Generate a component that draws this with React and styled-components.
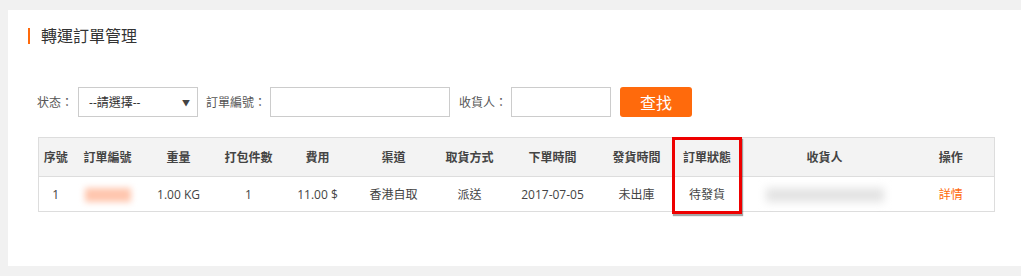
import React from "react";
import styled, { createGlobalStyle } from "styled-components";

const GlobalStyle = createGlobalStyle`
  body {
    margin: 0;
    background: #f1f1f1;
    font-family: "Open Sans", "Noto Sans CJK TC", sans-serif;
  }
`;

const Page = styled.div`
  padding: 10px 0 10px 8px;
`;

const Panel = styled.div`
  background: #fff;
  height: 256px;
  display: flex;
  flex-direction: column;
`;

const Title = styled.div`
  margin: 18px 0 0 20px;
  padding-left: 11px;
  border-left: 2px solid #ff6a0c;
  height: 16px;
  line-height: 16px;
  font-size: 16px;
  color: #333;
`;

const FilterRow = styled.div`
  display: flex;
  align-items: center;
  margin: 43px 0 0 29px;
  height: 30px;
`;

const Label = styled.span`
  font-size: 12px;
  color: #555;
  margin-right: ${(p) => p.gap || "4px"};
`;

const SelectBox = styled.div`
  box-sizing: border-box;
  width: 120px;
  height: 30px;
  border: 1px solid #ccc;
  display: flex;
  align-items: center;
  justify-content: space-between;
  padding: 0 7px 0 10px;
  font-size: 12px;
  color: #333;
  margin-right: 8px;
`;

const Arrow = styled.span`
  font-size: 8px;
  color: #444;
`;

const TextInput = styled.input`
  box-sizing: border-box;
  width: ${(p) => p.w};
  height: 30px;
  border: 1px solid #ccc;
  margin-right: ${(p) => p.mr};
  outline: none;
`;

const SearchButton = styled.button`
  width: 72px;
  height: 30px;
  border: none;
  border-radius: 3px;
  background: #ff6a0c;
  color: #fff;
  font-size: 16px;
  font-family: inherit;
  padding: 0;
`;

const TableWrap = styled.div`
  position: relative;
  margin: 20px 0 0 30px;
  width: 956px;
`;

const Table = styled.table`
  width: 956px;
  border-collapse: collapse;
  table-layout: fixed;
  border: 1px solid #ddd;
  font-size: 12px;
`;

const Th = styled.th`
  height: 38px;
  padding: 0;
  background: #f3f3f3;
  border-bottom: 1px solid #ddd;
  font-weight: bold;
  color: #444;
  text-align: center;
`;

const Td = styled.td`
  height: 34px;
  padding: 0;
  text-align: center;
  color: ${(p) => p.color || "#444"};
`;

const Blur = styled.span`
  display: inline-block;
  vertical-align: middle;
  width: ${(p) => p.w};
  height: 14px;
  background: ${(p) => p.bg};
  filter: blur(${(p) => p.r || "3px"});
`;

const Highlight = styled.div`
  position: absolute;
  left: 634px;
  top: 0;
  width: 70px;
  height: 77px;
  box-sizing: border-box;
  border: 3px solid #ee0000;
  box-shadow: 1px 2px 1px rgba(0, 0, 0, 0.35);
`;

const columns = [
  ["序號", 34],
  ["訂單編號", 70],
  ["重量", 72],
  ["打包件數", 68],
  ["費用", 70],
  ["渠道", 82],
  ["取貨方式", 70],
  ["下單時間", 96],
  ["發貨時間", 72],
  ["訂單狀態", 69],
  ["收貨人", 166],
  ["操作", 87],
];

export default function App() {
  return (
    <Page>
      <GlobalStyle />
      <Panel>
        <Title>轉運訂單管理</Title>
        <FilterRow>
          <Label gap="5px">状态：</Label>
          <SelectBox>
            <span>--請選擇--</span>
            <Arrow>▼</Arrow>
          </SelectBox>
          <Label>訂單編號：</Label>
          <TextInput w="180px" mr="9px" />
          <Label>收貨人：</Label>
          <TextInput w="100px" mr="9px" />
          <SearchButton>查找</SearchButton>
        </FilterRow>
        <TableWrap>
          <Table>
            <colgroup>
              {columns.map(([name, w]) => (
                <col key={name} style={{ width: w }} />
              ))}
            </colgroup>
            <thead>
              <tr>
                {columns.map(([name]) => (
                  <Th key={name}>{name}</Th>
                ))}
              </tr>
            </thead>
            <tbody>
              <tr>
                <Td>1</Td>
                <Td>
                  <Blur w="46px" bg="#ffc6ae" />
                </Td>
                <Td>1.00 KG</Td>
                <Td>1</Td>
                <Td>11.00 $</Td>
                <Td>香港自取</Td>
                <Td>派送</Td>
                <Td>2017-07-05</Td>
                <Td>未出庫</Td>
                <Td>待發貨</Td>
                <Td>
                  <Blur w="118px" bg="#e3e3e3" r="4px" />
                </Td>
                <Td color="#ff6a0c">詳情</Td>
              </tr>
            </tbody>
          </Table>
          <Highlight />
        </TableWrap>
      </Panel>
    </Page>
  );
}
